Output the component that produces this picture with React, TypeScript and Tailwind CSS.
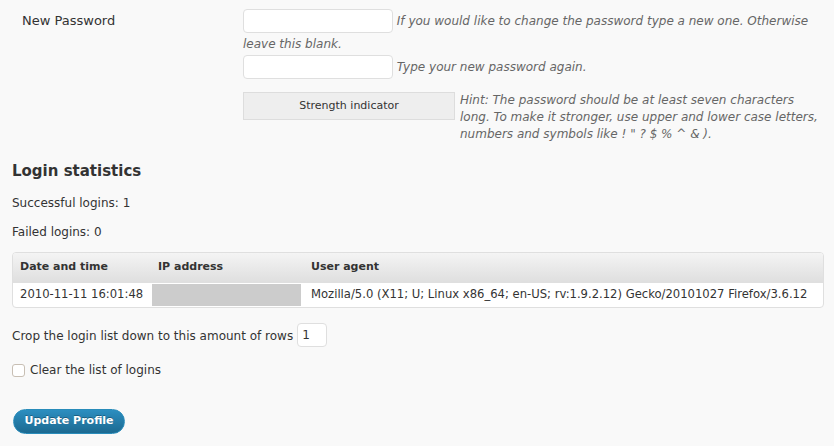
import React from "react";

export default function App() {
  const font = { fontFamily: '"DejaVu Sans", Verdana, sans-serif' };
  return (
    <div className="min-h-[446px] w-[834px] bg-[#f9f9f9] text-[#333]" style={font}>
      <div className="pl-[12px] pr-[10px]">
        {/* Password row */}
        <div className="flex">
          <div className="w-[221px] shrink-0 pl-[10px] pt-[12px] text-[13px] leading-[17px]">New Password</div>
          <div className="w-[581px] pl-[10px] pt-[9px]">
            <div className="text-[12px] leading-[22px]">
              <span className="inline-block h-[24px] w-[150px] rounded-[4px] border border-[#dfdfdf] bg-white align-middle"></span>{" "}
              <span className="italic text-[#666]">
                If you would like to change the password type a new one. Otherwise leave this blank.
              </span>
              <br />
              <span className="inline-block h-[24px] w-[150px] rounded-[4px] border border-[#dfdfdf] bg-white align-middle"></span>{" "}
              <span className="italic text-[#666]">Type your new password again.</span>
            </div>
            <div className="mt-[13px] flex gap-[5px]">
              <div className="flex h-[28px] w-[212px] shrink-0 items-center justify-center border border-[#dddddd] bg-[#eeeeee] text-[11px] text-[#333]">
                Strength indicator
              </div>
              <p className="w-[364px] shrink-0 text-[12px] italic leading-[17px] text-[#666]">
                Hint: The password should be at least seven characters long. To make it stronger, use upper and lower case letters, numbers and symbols like ! " ? $ % ^ &amp; ).
              </p>
            </div>
          </div>
        </div>

        {/* Login statistics */}
        <h3 className="mt-[19px] text-[15px] font-bold leading-[18px]">Login statistics</h3>
        <p className="mt-[15px] text-[12px] leading-[17px]">Successful logins: 1</p>
        <p className="mt-[12px] text-[12px] leading-[17px]">Failed logins: 0</p>

        <div className="mt-[11px] w-[812px] overflow-hidden rounded-[4px] border border-[#dfdfdf] bg-white">
          <div className="grid h-[30px] grid-cols-[138px_153px_1fr] items-center border-b border-[#dfdfdf] bg-gradient-to-b from-[#f4f4f4] to-[#dfdfdf] text-[11px] font-bold text-[#333]">
            <div className="pl-[7px]">Date and time</div>
            <div className="pl-[7px]">IP address</div>
            <div className="pl-[7px]">User agent</div>
          </div>
          <div className="grid h-[24px] grid-cols-[138px_153px_1fr] items-stretch text-[11.6px]">
            <div className="flex items-center whitespace-nowrap pl-[7px]">2010-11-11 16:01:48</div>
            <div className="py-[1px] pl-[1px] pr-[3px]">
              <div className="h-full w-full bg-[#cccccc]"></div>
            </div>
            <div className="flex items-center whitespace-nowrap pl-[7px]">
              Mozilla/5.0 (X11; U; Linux x86_64; en-US; rv:1.9.2.12) Gecko/20101027 Firefox/3.6.12
            </div>
          </div>
        </div>

        <div className="mt-[15px] flex items-center gap-[4px] text-[12px]">
          <span className="pt-[2px]">Crop the login list down to this amount of rows</span>
          <span className="flex h-[24px] w-[30px] items-center rounded-[4px] border border-[#dfdfdf] bg-white pl-[4px]">1</span>
        </div>

        <label className="mt-[14px] flex items-center gap-[5px] text-[12px]">
          <span className="inline-block h-[13px] w-[13px] rounded-[3px] border border-[#c8bfb4] bg-white"></span>
          <span>Clear the list of logins</span>
        </label>

        <button className="mt-[30px] ml-[1px] h-[25px] w-[112px] rounded-full border border-[#298cba] bg-gradient-to-b from-[#2c8ec0] to-[#1c6a91] text-[11px] font-bold text-white [text-shadow:0_-1px_0_rgba(0,0,0,0.3)]">
          Update Profile
        </button>
      </div>
    </div>
  );
}
